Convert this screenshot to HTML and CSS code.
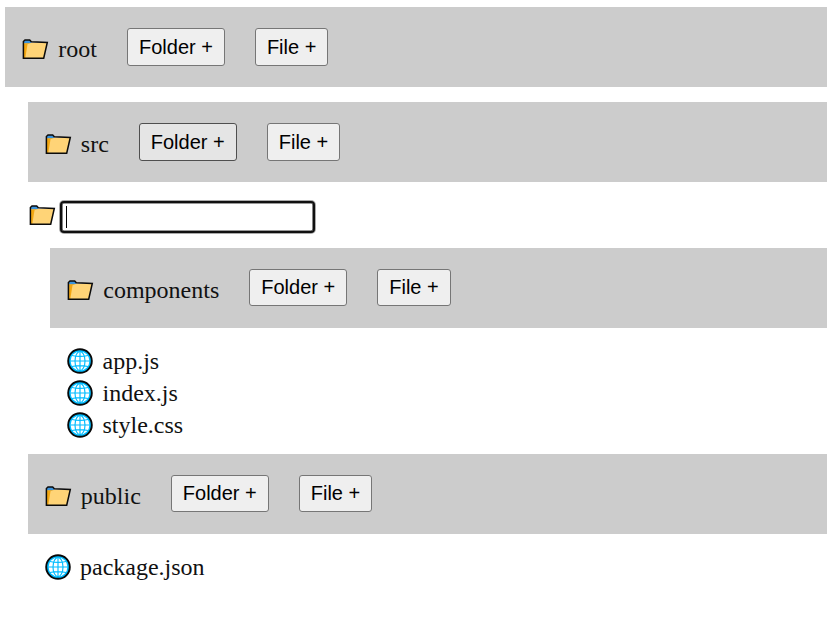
FILE: index.html
```
<!DOCTYPE html>
<html lang="en">
<head>
<meta charset="utf-8">
<title>File explorer</title>
<link rel="stylesheet" href="styles.css">
</head>
<body>
<svg class="sprite" width="0" height="0">
  <symbol id="folder" viewBox="0 0 26 21">
    <path fill="#3b93dc" d="M1 3.5L2.5 1H7L8.5 3V4.5H1Z"/>
    <path fill="#f3a712" d="M1 4.2H9L7 19H1Z"/>
    <path fill="#ffd477" d="M5 5.3L9 3.8L24.5 4L21.5 19H2.8Z"/>
    <path fill="none" stroke="#0b0b0b" stroke-width="1.5" d="M.9 19.2V2.5L2.5 1H7.2L8.8 2.8L24.8 3.4L21.2 19.2Z"/>
  </symbol>
  <symbol id="globe" viewBox="0 0 26 26">
    <circle cx="13" cy="13" r="11.7" fill="#00bcff"/>
    <circle cx="13" cy="13" r="9.4" fill="#fff"/>
    <g fill="none" stroke="#00bcff" stroke-width="1.15">
      <ellipse cx="13" cy="13" rx="5" ry="9.6"/>
      <path d="M13 3V23M3 13H23M5 7.5Q13 9.3 21 7.5M5 18.5Q13 16.7 21 18.5"/>
    </g>
    <circle cx="13" cy="13" r="11.8" fill="none" stroke="#080808" stroke-width="1.9"/>
  </symbol>
</svg>
<main class="tree">
  <div class="folder">
    <svg class="folder-icon"><use href="#folder"/></svg><span class="name">root</span>
    <button>Folder +</button><button>File +</button>
  </div>
  <div class="children first">
    <div class="folder">
      <svg class="folder-icon"><use href="#folder"/></svg><span class="name">src</span>
      <button class="hovered">Folder +</button><button>File +</button>
    </div>
    <div class="new-entry">
      <svg class="folder-icon"><use href="#folder"/></svg>
      <div class="field"><input type="text" aria-label="Folder name"><span class="caret"></span></div>
    </div>
    <div class="children">
      <div class="folder low">
        <svg class="folder-icon"><use href="#folder"/></svg><span class="name">components</span>
        <button>Folder +</button><button>File +</button>
      </div>
      <div class="files">
        <div class="file"><svg class="file-icon"><use href="#globe"/></svg><span>app.js</span></div>
        <div class="file"><svg class="file-icon"><use href="#globe"/></svg><span>index.js</span></div>
        <div class="file"><svg class="file-icon"><use href="#globe"/></svg><span>style.css</span></div>
      </div>
    </div>
    <div class="folder low">
      <svg class="folder-icon"><use href="#folder"/></svg><span class="name">public</span>
      <button>Folder +</button><button>File +</button>
    </div>
    <div class="files">
      <div class="file"><svg class="file-icon"><use href="#globe"/></svg><span>package.json</span></div>
    </div>
  </div>
</main>
</body>
</html>
```
FILE: styles.css
```
* { box-sizing: border-box; }
body {
  margin: 0;
  background: #fff;
  color: #111;
  font: 24px/32px "Liberation Serif", "Times New Roman", serif;
  overflow: hidden;
}
.sprite { display: none; }
.tree { padding: 7px 0 0 5px; }
.folder {
  display: flex;
  align-items: flex-start;
  height: 80px;
  padding: 21px 0 0 17px;
  background: #ccc;
  white-space: nowrap;
}
.folder-icon {
  display: block;
  flex: none;
  width: 27px;
  height: 21px;
}
.folder .folder-icon { margin-top: 10.5px; }
.name { margin: 5px 0 0 9.3px; }
.low .folder-icon { margin-top: 11px; }
button {
  flex: none;
  height: 38px;
  margin: 0 0 0 30px;
  padding: 0 11px;
  border: 1px solid #767676;
  border-radius: 3px;
  background: #efefef;
  color: #000;
  font: 20px/36px "Liberation Sans", Arial, sans-serif;
}
.low button { height: 37px; line-height: 35px; }
button.hovered { background: #e5e5e5; border-color: #4f4f4f; }
.children { padding-left: 22.5px; }
.first { padding-top: 15px; }
.new-entry {
  display: flex;
  height: 66px;
  padding: 18px 0 0 1.5px;
}
.new-entry .folder-icon { margin-top: 4.5px; }
.field { position: relative; margin-left: 4px; }
input {
  display: block;
  width: 255px;
  height: 32px;
  margin-top: 1px;
  padding: 0 4px;
  border: 2px solid #101010;
  border-radius: 4px;
  outline: 0;
  box-shadow: 0 0 0 1px #aaa, inset 0 0 0 .6px #333;
  font: 20px "Liberation Sans", Arial, sans-serif;
}
.caret {
  position: absolute;
  left: 6px;
  top: 6px;
  width: 1px;
  height: 22px;
  background: #000;
}
.files { padding: 17px 0 13px 17px; }
.file {
  display: flex;
  height: 32px;
  white-space: nowrap;
}
.file-icon {
  flex: none;
  width: 26px;
  height: 26px;
  margin: 3px 9.5px 0 0;
}
```
